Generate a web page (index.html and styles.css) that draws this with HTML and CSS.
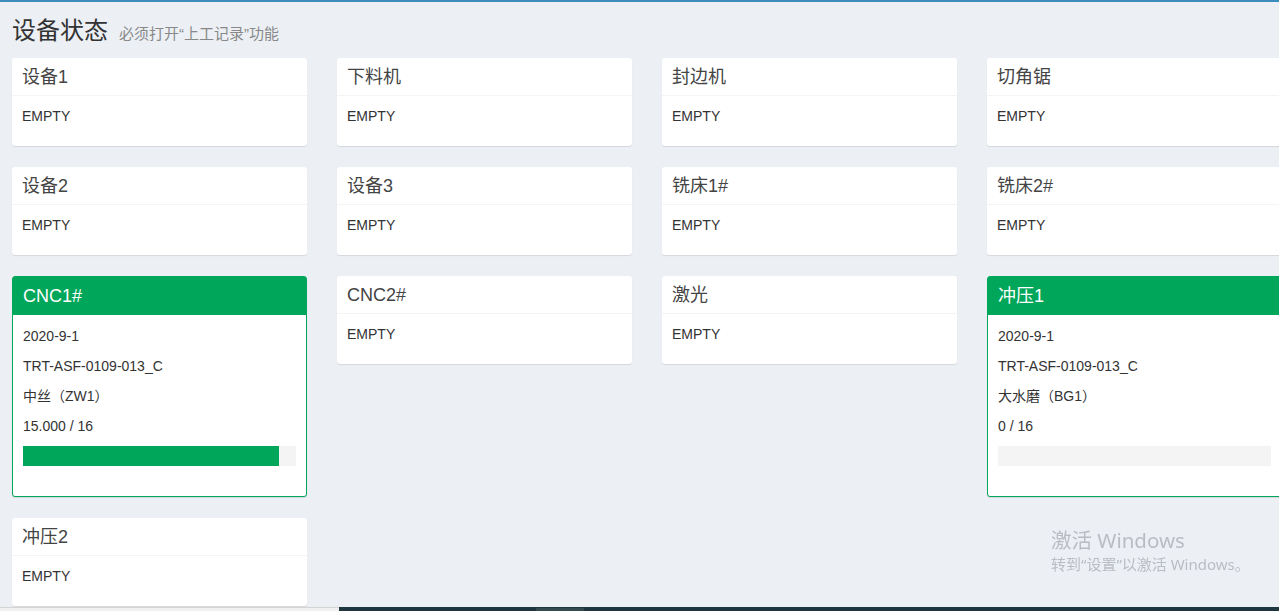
FILE: index.html
```html
<!DOCTYPE html>
<html lang="zh-CN">
<head>
<meta charset="utf-8">
<title>设备状态</title>
<link rel="stylesheet" href="styles.css">
</head>
<body>
<div class="page">
  <header class="page-header">
    <h1 class="page-title">设备状态</h1>
    <small class="page-sub">必须打开“上工记录”功能</small>
  </header>

  <main class="grid">
    <section class="card"><div class="card-header">设备1</div><div class="card-body"><p>EMPTY</p></div></section>
    <section class="card"><div class="card-header">下料机</div><div class="card-body"><p>EMPTY</p></div></section>
    <section class="card"><div class="card-header">封边机</div><div class="card-body"><p>EMPTY</p></div></section>
    <section class="card"><div class="card-header">切角锯</div><div class="card-body"><p>EMPTY</p></div></section>

    <section class="card"><div class="card-header">设备2</div><div class="card-body"><p>EMPTY</p></div></section>
    <section class="card"><div class="card-header">设备3</div><div class="card-body"><p>EMPTY</p></div></section>
    <section class="card"><div class="card-header">铣床1#</div><div class="card-body"><p>EMPTY</p></div></section>
    <section class="card"><div class="card-header">铣床2#</div><div class="card-body"><p>EMPTY</p></div></section>

    <section class="card card-success">
      <div class="card-header">CNC1#</div>
      <div class="card-body">
        <p>2020-9-1</p>
        <p>TRT-ASF-0109-013_C</p>
        <p>中丝（ZW1）</p>
        <p>15.000 / 16</p>
        <div class="progress"><div class="progress-bar" style="width: 93.75%"></div></div>
      </div>
    </section>
    <section class="card"><div class="card-header">CNC2#</div><div class="card-body"><p>EMPTY</p></div></section>
    <section class="card"><div class="card-header">激光</div><div class="card-body"><p>EMPTY</p></div></section>
    <section class="card card-success">
      <div class="card-header">冲压1</div>
      <div class="card-body">
        <p>2020-9-1</p>
        <p>TRT-ASF-0109-013_C</p>
        <p>大水磨（BG1）</p>
        <p>0 / 16</p>
        <div class="progress"><div class="progress-bar" style="width: 0%"></div></div>
      </div>
    </section>

    <section class="card"><div class="card-header">冲压2</div><div class="card-body"><p>EMPTY</p></div></section>
  </main>
</div>

<div class="watermark">
  <div class="wm-title">激活 Windows</div>
  <div class="wm-sub">转到“设置”以激活 Windows。</div>
</div>

<div class="bottom-strip">
  <div class="strip-light"></div>
  <div class="strip-dark"><div class="strip-thumb"></div></div>
</div>
</body>
</html>
```

FILE: styles.css
```css
html, body {
  margin: 0;
  padding: 0;
}

body {
  background: #ecf0f5;
  border-top: 2px solid #3c8dbc;
  overflow: hidden;
  height: 609px;
  font-family: "Liberation Sans", "Noto Sans CJK SC", sans-serif;
  font-size: 14px;
  color: #333;
}

.page {
  padding-left: 12px;
}

.page-header {
  box-sizing: border-box;
  height: 56px;
  padding-top: 15px;
  display: flex;
  align-items: baseline;
}

.page-title {
  margin: 0;
  font-size: 24px;
  line-height: 28px;
  font-weight: normal;
  color: #333;
}

.page-sub {
  margin-left: 11px;
  font-size: 15px;
  color: #888;
}

.grid {
  display: grid;
  grid-template-columns: repeat(4, 295px);
  column-gap: 30px;
  row-gap: 21px;
  align-items: start;
  width: 1270px;
}

.card {
  background: #fff;
  border-radius: 3px;
  box-shadow: 0 1px 1px rgba(0, 0, 0, 0.1);
}

.card-header {
  height: 35px;
  line-height: 35px;
  padding: 2px 10px 0;
  font-size: 18px;
  color: #444;
  border-bottom: 1px solid #f4f4f4;
}

.card-body {
  padding: 10px 10px 10px;
}

.card-body p {
  margin: 0 0 10px;
  line-height: 20px;
}

.card-success {
  border: 1px solid #00a65a;
}

.card-success .card-header {
  height: 37px;
  line-height: 37px;
  padding: 1px 10px 0;
  background: #00a65a;
  color: #fff;
  border-bottom: 0;
}

.card-success .card-body {
  padding: 11px 10px 10px;
}

.progress {
  height: 20px;
  margin-bottom: 20px;
  background: #f4f4f4;
}

.progress-bar {
  height: 100%;
  background: #00a65a;
}

.watermark {
  position: fixed;
  left: 1051px;
  top: 527px;
  font-family: "Noto Sans", "Noto Sans CJK SC", sans-serif;
  color: #b9bdc3;
}

.wm-title {
  font-size: 20.5px;
  line-height: 26px;
}

.wm-sub {
  font-size: 15px;
  line-height: 22px;
}

.bottom-strip {
  position: fixed;
  left: 0;
  right: 0;
  bottom: 0;
  height: 4px;
  display: flex;
}

.strip-light {
  width: 339px;
  box-sizing: border-box;
  background: #f0f0f0;
  border-top: 1px solid #d4d4d4;
}

.strip-dark {
  flex: 1;
  background: #1f3640;
  position: relative;
}

.strip-thumb {
  position: absolute;
  left: 197px;
  top: 1px;
  width: 48px;
  height: 3px;
  background: #364a53;
}
```
